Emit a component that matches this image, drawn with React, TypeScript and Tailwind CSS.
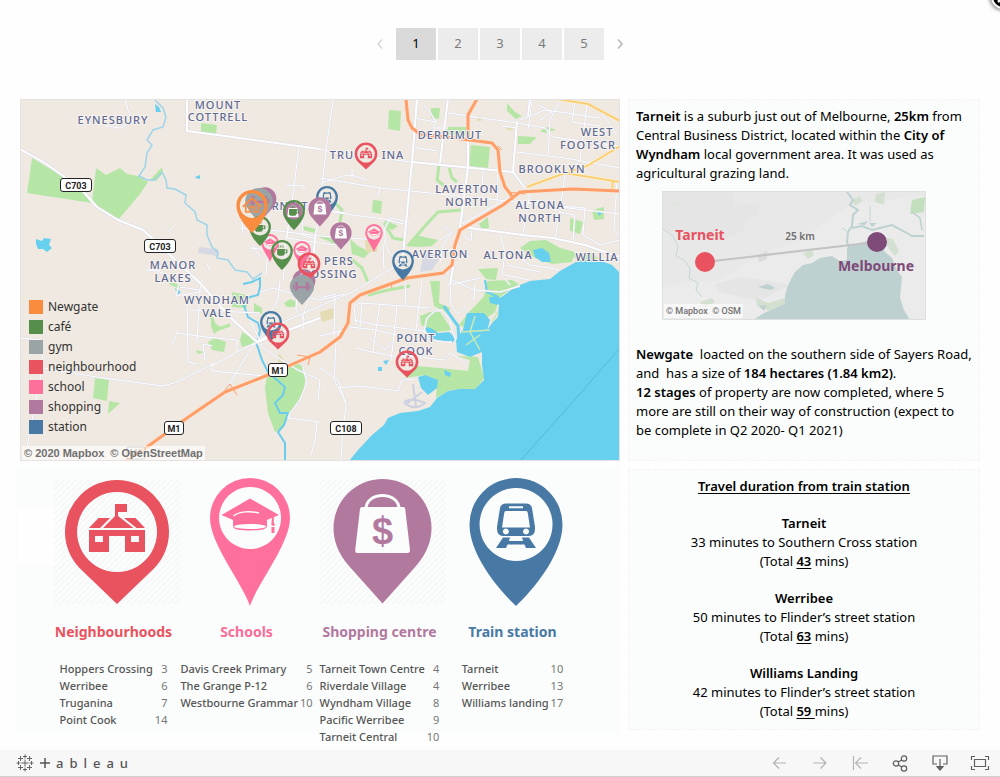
import React from "react";

type Line = string;

const PARKS: Line[] = [
  "32,158 60,175 80,188 92,203 27,193",
  "96,168 106,175 112,172 120,168 127,174 138,176 148,182 140,194 118,220 97,207 92,203",
  "162,167 150,180 156,181 163,173",
  "201,123 217,125 216,134 201,132",
  "95,378 109,380 107,401 93,398",
  "109,401 120,403 108,414",
  "267,377 297,363 303,367 306,375 303,393 290,413 283,428 275,432 268,413 265,387",
  "242,332 258,342 242,347 240,340",
  "232,292 246,295 247,308 232,307",
  "208,342 215,338 226,342 224,352 212,350",
  "254,303 262,308 262,314 254,312",
  "211,318 216,324 222,328 214,334 211,326",
  "196,350 204,352 198,354",
  "389,110 401,111 400,131 388,129",
  "431,108 440,108 439,119 431,118",
  "471,145 490,147 488,168 469,166",
  "446,127 466,127 467,135 448,134",
  "373,200 382,201 381,214 372,212",
  "415,235 438,240 432,246 418,247 406,246",
  "385,220 398,226 392,230 384,226",
  "570,218 583,222 580,234 570,231",
  "592,210 604,207 604,219 594,220",
  "479,224 488,217 489,228 482,229",
  "520,248 530,241 546,240 560,248 575,252 572,262 552,264 535,258",
  "478,269 498,268 496,280 486,279",
  "572,255 590,252 600,260 580,262",
  "518,136 537,137 530,144 518,144",
  "540,131 548,127 556,130 545,133",
  "507,103 515,112 522,116 516,119 507,111",
  "487,281 512,280 519,284 512,288 500,297 495,312 478,324 466,328 459,325 468,313 477,304 484,296",
  "430,281 440,281 439,303 450,308 448,314 434,306",
  "420,316 430,312 440,312 452,330 436,332 421,325",
  "405,378 415,366 440,368 468,371 470,360 456,356 478,357 484,378 476,389 450,390 436,398 437,382 425,375",
  "284,303 290,299 297,302 296,307 287,307",
  "303,226 316,229 314,233 304,230",
  "350,239 358,246 370,252 364,258 352,254",
];

const GREENWAYS: Line[] = [
  "408,246 425,226 438,212 462,210",
  "439,165 437,180 446,187",
  "449,168 452,178 457,182",
  "335,203 342,210 340,222",
  "320,236 330,240 336,244",
  "350,258 362,268 368,282",
  "368,295 388,290 410,286",
  "210,313 216,330 230,325",
  "164,277 172,284 180,287",
  "384,223 393,238 404,240",
];

const WATER: Line[] = [
  "349,461 358,450 372,435 384,425 388,418 400,413 418,411 430,407 437,398 448,391 460,389 475,389 484,380 482,365 482,345 485,333 492,323 498,317 499,305 496,300 503,296 515,287 530,281 550,279 560,271 576,262 596,259 612,265 620,273 620,461",
  "155,104 159,107 161,112 156,112",
  "195,177 200,175 200,179 196,178",
  "36,239 42,241 44,238 51,239 49,245 52,248 47,252 43,249 38,249 36,244",
  "533,250 542,248 549,253 551,262 542,262 535,257",
  "467,313 484,313 490,320 486,335 482,352 470,357 457,352 456,340 463,330",
  "418,377 425,375 438,380 437,388 428,395 421,388",
  "424,327 431,328 438,333 449,332 456,338 452,343 440,340 432,341",
  "378,367 382,367 382,371 378,371",
  "383,361 389,360 386,365",
  "444,370 451,373 450,377 445,375",
  "489,297 499,296 498,305 490,303",
  "597,211 603,212 599,216",
  "175,288 181,292 177,295",
];

const MINOR: Line[] = [
  "105,126 120,128 133,122 128,110 125,99",
  "322,183 342,176 352,175 366,180",
  "352,170 352,178", "286,185 304,186 304,190",
  "333,100 326,150 320,205 312,260", "320,149 335,153 412,162",
  "320,178 380,188 450,195 517,202 620,214",
  "380,187 378,196", "299,147 292,202 287,235 283,280",
  "414,118 436,122 433,128 448,128", "424,105 430,112 436,122", "412,147 437,151",
  "448,113 517,123 545,128 553,137 620,146", "500,130 503,126 517,128",
  "532,100 528,130", "560,100 550,120 548,155", "587,105 580,160 565,175 560,210 555,238",
  "517,152 565,158 620,168", "600,110 617,135", "617,180 614,230 620,236",
  "520,120 545,110 560,112 600,118", "538,105 552,112 540,120", "575,100 572,122 600,126",
  "483,169 482,200", "498,170 497,203", "530,192 523,235", "533,200 560,206 585,208",
  "585,208 583,235 600,245 620,240", "560,212 575,215 573,240",
  "320,210 360,216 384,219 408,225", "410,222 390,218 384,230 386,242",
  "240,228 270,230 320,236 380,240", "242,222 243,234", "270,215 268,245 266,275",
  "303,206 302,235 314,238", "289,218 287,238 320,243 345,246",
  "250,248 270,250 288,252 312,255", "253,245 255,250 262,258",
  "300,206 320,209 345,213", "315,235 314,280 302,320",
  "260,292 274,288 296,295 320,300 345,294", "280,280 278,300 266,320",
  "297,291 296,310 304,318 303,330", "258,340 268,330 288,320 320,306 352,292 406,260",
  "257,343 275,356 298,370 320,380", "250,320 262,345",
  "320,336 345,330 350,325", "320,298 335,294 334,335", "340,328 336,342 334,380 346,402",
  "320,368 338,380 346,405 342,440 341,461", "338,388 360,386 398,391 402,380 415,379",
  "318,400 320,380",
  "177,333 206,337 237,340 237,352", "187,297 188,362 197,364", "190,310 260,313",
  "200,290 197,342", "178,330 172,345", "205,360 203,344 212,346",
  "212,363 212,371 264,376", "212,366 237,352 257,342", "228,387 242,363 255,343",
  "180,287 200,290 202,280", "146,270 158,271 168,277", "168,232 173,227",
  "207,263 210,271", "180,280 176,296 200,292",
  "20,338 42,340 43,363 36,400 27,447",
  "43,368 103,378 163,386 177,382 215,363",
  "303,367 307,383 300,400 290,413 288,418 320,422", "317,422 315,440 311,455",
  "355,305 360,303 390,305 430,308", "354,305 356,325", "362,303 360,327",
  "354,320 378,325 424,331", "350,327 376,330 400,336", "380,303 376,330 373,352",
  "397,305 394,335 391,360", "356,348 372,352 394,356", "370,338 385,350 392,342",
  "394,356 420,357 444,360 450,353", "450,353 463,361 468,365", "405,283 406,306",
  "424,331 427,318 436,310 442,310 450,320 452,331 456,340",
  "424,331 428,338 440,342 452,342", "422,281 416,330", "450,280 451,305 458,314 465,308",
  "452,280 475,290 500,292 520,286", "475,283 474,300",
  "463,235 471,241 472,228", "450,235 443,245 440,262", "383,245 384,270",
  "500,235 505,252 502,275 510,285", "405,262 390,255 384,240",
  "520,258 530,265 550,268 560,270", "507,265 540,272", "505,275 530,280",
  "443,225 452,232 440,240", "460,225 512,196", "448,285 480,278",
];

const MAJOR: Line[] = [
  "187,99 187,131 320,149",
  "20,149 45,163 80,188 97,207 118,220 143,230 170,255 200,283 230,317 257,342 268,336",
  "417,99 412,162 403,255", "448,99 440,163", "468,140 468,167 460,227 450,285",
  "412,162 513,172 525,188", "517,121 513,172", "462,227 523,235 553,238 585,245 620,257",
  "530,99 528,116", "257,342 320,318",
];

const YELLOW: Line[] = [
  "557,99 588,104 620,121",
  "527,187 565,173 587,166 620,146",
  "565,173 620,182", "613,180 612,190",
];

const MOTORWAY: Line[] = [
  "406,99 408,120 412,128 420,134 470,140 492,143 498,150 500,172 505,187 512,196",
  "477,99 468,115 468,140",
  "620,191 573,189 520,192 503,205 460,230 455,245 452,265 443,273 407,278 360,295 350,303 348,323 340,337 320,352 268,375 225,392 187,418 147,447 126,461",
];

const LABELS: [number, number, string][] = [
  [113, 124, "EYNESBURY"], [218, 109, "MOUNT"], [218, 121, "COTTRELL"],
  [450, 139, "DERRIMUT"], [597, 136, "WEST"], [588, 149, "FOOTSCR"],
  [342, 159, "TRU"], [393, 159, "INA"], [552, 173, "BROOKLYN"],
  [467, 193, "LAVERTON"], [467, 206, "NORTH"], [540, 209, "ALTONA"], [540, 222, "NORTH"],
  [290, 210, "RNEIT"], [440, 258, "AVERTON"], [508, 259, "ALTONA"], [597, 261, "WILLIA"],
  [173, 269, "MANOR"], [173, 282, "LAKES"], [339, 265, "PERS"], [334, 278, "OSSING"],
  [217, 304, "WYNDHAM"], [217, 317, "VALE"], [416, 342, "POINT"], [416, 355, "COOK"],
];

const SHIELDS: [number, number, string][] = [
  [76, 185, "C703"], [160, 246, "C703"], [278, 370, "M1"], [174, 428, "M1"], [346, 428, "C108"],
];

type Kind = "neighbourhood" | "school" | "shopping" | "station" | "cafe" | "gym" | "newgate";

const COLORS: Record<Kind, string> = {
  newgate: "#fa8c3f",
  cafe: "#568f4b",
  gym: "#9aa3a6",
  neighbourhood: "#e9525f",
  school: "#ff709d",
  shopping: "#b2799f",
  station: "#4879a5",
};

const DROP =
  "M63 128C46 112 16.5 77 16.5 46.5A46.5 46.5 0 0 1 109.5 46.5C109.5 77 80 112 63 128Z";
const DROP_HOLE = "M63 10a36.5 36.5 0 1 0 .1 0Z";

function PinArt({ kind }: { kind: Kind }) {
  const c = COLORS[kind];
  switch (kind) {
    case "neighbourhood":
      return (
        <g fill={c} fillRule="evenodd">
          <path d="M63 126L25.5 90A52 52 0 1 1 100.5 90ZM63 14a40 40 0 1 0 .1 0Z" />
          <path d="M35 52H91V74H71V58H55V74H35ZM41 58V64H49V58ZM77 58V64H85V58Z" />
          <path d="M49 50L61 38V26H73V34H64V38L79.5 50Z" />
          <path d="M35 50L44.500 40H56L46 50ZM70 40H81.500L91 50H82.500Z" />
        </g>
      );
    case "school":
      return (
        <g fill={c} fillRule="evenodd">
          <path d="M63 128C56 106 23 66 23 40A40 40 0 0 1 103 40C103 66 70 106 63 128ZM63 9a31 31 0 1 0 .1 0Z" />
          <path d="M34.500 37L63 20.500L92 37L80 42V48C80 52 71 52.500 63 52.500S46 52 46 48V42Z" />
          <path d="M85 39h1.800v6l1.500 2-2.200 1-1.800-1z M84.500 49h3v6h-3z" />
          <path d="M46.500 38C52 33 64 33 72 35" fill="none" stroke="#fff" strokeWidth="1.500" />
          <ellipse cx="63" cy="48.500" rx="16" ry="2.600" fill="#fff" />
        </g>
      );
    case "shopping":
      return (
        <g>
          <path
            fill={c}
            d="M62.500 125.500L29 88C18 75 13.500 63 13.500 50A49 49 0 0 1 111.500 50C111.500 63 107 75 96 88Z"
          />
          <path d="M46 31C46 13 79 13 79 31" fill="none" stroke="#fbfdfc" strokeWidth="3" />
          <path d="M42 29H83.500Q85 29 85.200 31L90 72Q90 75 87.500 75H37.500Q35 75 35.200 72L40 31Q40.200 29 42 29Z" fill="#fbfdfc" />
          <text x="62.500" y="65.500" textAnchor="middle" fontSize="38" fontWeight="700" fontFamily="Liberation Sans, sans-serif" fill={c}>
            $
          </text>
        </g>
      );
    case "station":
      return (
        <g fill={c} fillRule="evenodd">
          <path d={DROP + DROP_HOLE} />
          <path d="M53 25.500H73Q78 25.500 79 30L82 49Q82.500 58 76 58H50Q43.500 58 44 49L47 30Q48 25.500 53 25.500ZM56 28.200V30.200H70V28.200ZM53 33Q51.500 33 51.200 35L49 49.500H77L74.800 35Q74.500 33 73 33ZM52.800 50.500a3 3 0 1 0 .1 0ZM73 50.500a3 3 0 1 0 .1 0Z" />
          <path d="M50 59.500H57L56 63H70L69 59.500H76L83 70H73L71.500 66.500H54.500L53 70H43Z" />
        </g>
      );
    case "cafe":
      return (
        <g fill={c} fillRule="evenodd">
          <path d={DROP + DROP_HOLE} />
          <path d="M42 38H75V41H86V56H75Q74 67 65 67H52Q42 67 42 56ZM75 45V52H81V45Z" />
          <path d="M49 24v9M58 22v11M67 24v9" stroke={c} strokeWidth="3.500" />
        </g>
      );
    case "gym":
      return (
        <g>
          <path d="M63 128C43 105 11 76 11 50A52 50 0 0 1 115 50C115 76 83 105 63 128Z" fill={c} />
          <path
            d="M34 30h12v18h34v-18h12v36h-12v-10h-34v10h-12zM25 40h6v20h-6zM95 40h6v20h-6z"
            fill={COLORS.shopping}
          />
        </g>
      );
    case "newgate":
      return (
        <g fill={c} fillRule="evenodd">
          <path d={DROP + DROP_HOLE} />
          <path d="M34 48L63 20L92 48L88 52L84 48V68H67V52H59V68H42V48L38 52ZM47 44V63H54V47H72V63H79V44L63 28Z" />
        </g>
      );
  }
}

const PINS: [Kind, number, number, number][] = [
  ["shopping", 265, 217, 30],
  ["station", 327, 216, 30],
  ["shopping", 320, 227, 30],
  ["gym", 259, 222, 34],
  ["school", 270, 262, 28],
  ["cafe", 260, 246, 30],
  ["shopping", 293, 228, 26],
  ["cafe", 294, 230, 30],
  ["school", 302, 269, 28],
  ["cafe", 282, 270, 30],
  ["shopping", 304, 299, 30],
  ["neighbourhood", 309, 280, 28],
  ["gym", 302, 305, 30],
  ["shopping", 341, 250, 28],
  ["school", 374, 252, 28],
  ["station", 403, 280, 30],
  ["neighbourhood", 366, 170, 28],
  ["station", 271, 341, 30],
  ["neighbourhood", 278, 350, 28],
  ["neighbourhood", 407, 378, 28],
  ["newgate", 252, 233, 43],
];

function Roads({ lines, color, width }: { lines: Line[]; color: string; width: number }) {
  return (
    <g fill="none" stroke={color} strokeWidth={width} strokeLinejoin="round">
      {lines.map((p) => (
        <polyline key={p} points={p} />
      ))}
    </g>
  );
}

function SuburbMap() {
  return (
    <svg viewBox="20 99 600 362" className="block w-full" role="img" aria-label="Map of Tarneit and surrounding suburbs">
      <rect x="20" y="99" width="600" height="362" fill="#f0e9e1" />
      <g fill="#b5e6a5">
        {PARKS.map((p) => (
          <polygon key={p} points={p} />
        ))}
      </g>
      <Roads lines={GREENWAYS} color="#b5e6a5" width={3} />
      <g fill="#d6d9e3">
        <polygon points="199,247 218,249 217,256 198,253" />
        <polygon points="424,251 437,249 440,258 432,270 420,272" />
      </g>
      <g fill="#e4dcb4">
        <polygon points="477,116 481,116 481,121 477,121" />
        <polygon points="365,240 378,241 377,252 366,252" />
        <polygon points="279,353 284,360 282,366 278,362" />
        <polygon points="320,312 333,308 335,318 322,322" />
        <polygon points="505,127 513,126 513,130 507,130" />
      </g>
      <g fill="#67d0ee">
        {WATER.map((p) => (
          <polygon key={p} points={p} />
        ))}
      </g>
      <polyline points="620,348 570,405 520,461" fill="none" stroke="#55b8d8" strokeWidth="1" />
      <polyline
        points="155,100 163,108 166,117 163,127 153,130 147,140 152,145 147,153 145,167 139,176 147,180 155,180 162,172 166,180 167,188 175,189 186,195 185,203 195,212 197,220 207,225 207,235 212,247 218,252 217,258 228,260 235,270 247,272 253,279 262,273"
        fill="none"
        stroke="#9fd4ea"
        strokeWidth="1.500"
      />
      <polyline
        points="243,284 252,282 260,278 260,287 258,295 250,297 243,303 248,317 258,323 260,330 257,345 262,360 268,372 285,387 283,395 275,403 280,413 288,413 284,425 278,432 285,443 285,461"
        fill="none"
        stroke="#6accec"
        strokeWidth="2"
      />
      <polyline points="444,306 452,318 458,326 459,340" fill="none" stroke="#67d0ee" strokeWidth="3" />
      <polyline points="485,280 487,292 498,297" fill="none" stroke="#67d0ee" strokeWidth="2" />
      <path d="M475 316L470 332L480 350M462 332L490 330M466 345L480 335M498 312L492 322" fill="none" stroke="#cbe9b4" strokeWidth="1.500" />
      <path d="M413 384L416 407M405 405L422 392M404 402Q414 412 425 403Q412 397 404 402" fill="none" stroke="#cdd0e0" strokeWidth="2" />
      <Roads lines={MINOR} color="#dedfea" width={2} />
      <Roads lines={MINOR} color="#ffffff" width={1} />
      <Roads lines={MAJOR} color="#d9dae8" width={3} />
      <Roads lines={MAJOR} color="#ffffff" width={2} />
      <Roads lines={YELLOW} color="#fff3d0" width={3} />
      <Roads lines={YELLOW} color="#f9cf76" width={2} />
      <Roads lines={MOTORWAY} color="#fbe3d2" width={4} />
      <Roads lines={MOTORWAY} color="#ff9e68" width={3} />
      <g fill="none" stroke="#ff9e68" strokeWidth="1">
        <path d="M225 390L230 384L237 395M297 355L310 357L308 365M505 187L513 200M508 192L525 194M498 146L502 150M390 283L392 288" />
      </g>

      <g
        fontFamily="Noto Sans, Open Sans, sans-serif"
        fontSize="11"
        fontWeight="500"
        textAnchor="middle"
        letterSpacing="1"
        fill="#5e6a92"
        stroke="#f7f3ef"
        strokeWidth="2"
        paintOrder="stroke"
      >
        {LABELS.map(([x, y, t]) => (
          <text key={`${t}${x}${y}`} x={x} y={y}>
            {t}
          </text>
        ))}
      </g>

      <g fontFamily="Roboto, sans-serif" fontSize="9" fontWeight="700" textAnchor="middle">
        <g opacity="0.4">
          <rect x="127" y="447" width="18" height="12" rx="2" fill="#fff" stroke="#222" />
          <text x="136" y="456">M1</text>
        </g>
        {SHIELDS.map(([x, y, t]) => {
          const w = t.length > 2 ? 31 : 19;
          return (
            <g key={`${t}${x}`}>
              <rect x={x - w / 2} y={y - 6.5} width={w} height="13" rx="2.500" fill="#fff" stroke="#222" strokeWidth="1" />
              <text x={x} y={y + 3.5} fill="#222">
                {t}
              </text>
            </g>
          );
        })}
      </g>

      {PINS.map(([kind, x, tip, h]) => (
        <svg key={`${kind}${x}${tip}`} x={x - h / 2} y={tip - h} width={h} height={h} viewBox="0 0 126 128">
          <PinArt kind={kind} />
        </svg>
      ))}
      <rect x="20.500" y="99.500" width="599" height="361" fill="none" stroke="#e3e3e3" />
    </svg>
  );
}

const LEGEND: [string, string][] = [
  ["Newgate", "bg-[#fa8c3f]"],
  ["café", "bg-[#568f4b]"],
  ["gym", "bg-[#9aa3a6]"],
  ["neighbourhood", "bg-[#e9525f]"],
  ["school", "bg-[#ff709d]"],
  ["shopping", "bg-[#b2799f]"],
  ["station", "bg-[#4879a5]"],
];

function DistanceMap() {
  return (
    <svg viewBox="662 191 264 129" className="block w-full" role="img" aria-label="Distance from Tarneit to Melbourne">
      <rect x="662" y="191" width="264" height="129" fill="#e8e8e8" />
      <polygon points="662,191 732,191 735,205 760,203 758,215 745,222 742,232 720,240 690,236 662,230" fill="#e5e5e5" />
      <polygon points="760,255 800,240 850,205 926,195 926,320 662,320 662,285 720,280" fill="#ebebeb" />
      <polygon points="715,284 742,277 790,285 760,301 720,292" fill="#e5e5e5" />
      <g fill="#d3dfcf">
        <polygon points="756,298 768,303 785,298 787,305 770,311 757,306" />
        <polygon points="852,200 860,196 862,201 855,206" />
        <polygon points="876,194 885,192 884,205 875,202" />
        <polygon points="912,200 925,197 924,212 910,214" fill="#c2dfbe" />
        <polygon points="887,238 893,239 899,251 895,256 887,246" />
        <polygon points="803,253 812,250 814,255 808,259" />
        <polygon points="700,302 712,298 715,302 705,308" />
        <polygon points="672,203 679,203 679,207 672,207" fill="#e0e6dd" />
      </g>
      <path d="M753 320L764 313L785 304L785 296L787 288L791 279L795 272L803 265L812 263L820 258L832 256L840 261L847 260L847 248L851 245L868 241L882 245L885 252L892 258L897 270L902 277L900 298L904 310L910 320Z" fill="#bed1d1" />
      <path d="M758 287L768 284L775 288L770 290ZM759 306L766 305L764 311ZM857 224L868 221L865 225ZM869 223L877 223L872 227Z" fill="#bed1d1" />
      <g fill="none" stroke="#bed1d1">
        <path d="M847 192L853 200L850 205L858 210L853 215L852 226L848 232L847 242L850 250" strokeWidth="2" />
        <path d="M852 228L862 226L872 230L892 225L905 232L912 236L924 236" strokeWidth="2" />
        <path d="M912 212L920 218L922 230" strokeWidth="1.500" />
        <path d="M870 206V222M842 228L848 232" strokeWidth="0.800" />
        <path d="M663 229L673 236L678 246L676 256L684 260L690 268L689 278L698 283L696 290L702 297" strokeWidth="0.800" />
      </g>
      <polygon points="757,255 767,251 767,259 759,262" fill="#dcdcdc" />
      <line x1="705" y1="262" x2="877" y2="242" stroke="#c3c3c3" strokeWidth="2" />
      <circle cx="705" cy="262" r="10" fill="#e9525f" />
      <circle cx="877" cy="242" r="10" fill="#7e4a78" />
      <g fontFamily="Noto Sans, Open Sans, sans-serif" textAnchor="middle">
        <text x="700" y="240" fontSize="14" fontWeight="700" fill="#e9525f">Tarneit</text>
        <text x="876" y="271" fontSize="14" fontWeight="700" fill="#7e4a78">Melbourne</text>
        <text x="800" y="240" fontSize="10" fontWeight="600" fill="#6f6f6f">25 km</text>
      </g>
      <rect x="662.500" y="191.500" width="263" height="128" fill="none" stroke="#dfdfdf" />
    </svg>
  );
}

interface Category {
  kind: Kind;
  title: string;
  color: string;
  hatched: boolean;
  rows: [string, number][];
}

const CATEGORIES: Category[] = [
  {
    kind: "neighbourhood", title: "Neighbourhoods", color: "text-[#e9525f]", hatched: true,
    rows: [["Hoppers Crossing", 3], ["Werribee", 6], ["Truganina", 7], ["Point Cook", 14]],
  },
  {
    kind: "school", title: "Schools", color: "text-[#fa6d99]", hatched: false,
    rows: [["Davis Creek Primary", 5], ["The Grange P-12", 6], ["Westbourne Grammar", 10]],
  },
  {
    kind: "shopping", title: "Shopping centre", color: "text-[#b2799f]", hatched: true,
    rows: [["Tarneit Town Centre", 4], ["Riverdale Village", 4], ["Wyndham Village", 8], ["Pacific Werribee", 9], ["Tarneit Central", 10]],
  },
  {
    kind: "station", title: "Train station", color: "text-[#4879a5]", hatched: false,
    rows: [["Tarneit", 10], ["Werribee", 13], ["Williams landing", 17]],
  },
];

function CategoryCard({ item }: { item: Category }) {
  return (
    <section className="flex flex-col items-center">
      <svg viewBox="0 0 126 128" className="h-32 w-[126px]" aria-hidden="true">
        {item.hatched && (
          <>
            <defs>
              <pattern id={`hatch-${item.kind}`} width="6" height="6" patternUnits="userSpaceOnUse">
                <path d="M-1 7L7 -1M-1 1L1 -1M5 7L7 5" stroke="#f5f6f6" strokeWidth="1.500" />
              </pattern>
            </defs>
            <rect y="2" width="126" height="124" fill={`url(#hatch-${item.kind})`} />
          </>
        )}
        <PinArt kind={item.kind} />
      </svg>
      <h2 className={`mt-4 pr-1.5 text-[14px] leading-5 font-bold whitespace-nowrap ${item.color}`}>{item.title}</h2>
      <table className="mt-[18px] mr-1.5 text-[11px] leading-[17px] whitespace-nowrap text-[#555]">
        <tbody>
          {item.rows.map(([name, minutes]) => (
            <tr key={name}>
              <th scope="row" className="p-0 text-left font-medium">{name}</th>
              <td className="p-0 pl-0.5 text-right text-[#777]">{minutes}</td>
            </tr>
          ))}
        </tbody>
      </table>
    </section>
  );
}

const TRIPS: [string, string, string][] = [
  ["Tarneit", "33 minutes to Southern Cross station", "43"],
  ["Werribee", "50 minutes to Flinder’s street station", "63"],
  ["Williams Landing", "42 minutes to Flinder’s street station", "59 "],
];

function TableauMark() {
  const crosses: [number, number, number][] = [
    [9, 9, 3.5], [9, 2.5, 2], [9, 15.5, 2], [2.5, 9, 2], [15.5, 9, 2],
    [4.5, 4.5, 2.5], [13.5, 4.5, 2.5], [4.5, 13.5, 2.5], [13.5, 13.5, 2.5],
  ];
  return (
    <svg viewBox="0 0 18 18" className="size-[18px]" aria-hidden="true">
      {crosses.map(([x, y, r]) => (
        <path key={`${x}-${y}`} d={`M${x - r} ${y}H${x + r}M${x} ${y - r}V${y + r}`} stroke="#666" strokeWidth="1" />
      ))}
    </svg>
  );
}

function ToolButton({ label, muted, children }: { label: string; muted?: boolean; children: React.ReactNode }) {
  return (
    <button type="button" aria-label={label} disabled={muted} className="flex size-5 items-center justify-center">
      <svg viewBox="0 0 20 20" className="size-5" fill="none" stroke={muted ? "#b4b4b4" : "#5f5f5f"} strokeWidth="1.200">
        {children}
      </svg>
    </button>
  );
}

export default function App() {
  return (
    <div className="relative overflow-hidden bg-[#fefefe] font-['Noto_Sans','Open_Sans',sans-serif] text-black">
      <button type="button" aria-label="Close" className="absolute -top-[15px] -right-[15px] flex size-6 items-center justify-center rounded-full border-2 border-white bg-black shadow-[0_0_4px_1px_rgba(0,0,0,0.6)]">
        <svg viewBox="0 0 12 12" className="size-3" stroke="#fff" strokeWidth="2.500" aria-hidden="true">
          <path d="M1 1L11 11M11 1L1 11" />
        </svg>
      </button>

      <nav aria-label="Story points" className="flex items-center justify-center pt-7 text-[13px]">
        <button type="button" aria-label="Previous" disabled className="mr-2 flex h-8 w-4 items-center justify-center">
          <svg viewBox="0 0 6 10" className="h-2.5 w-1.5" fill="none" stroke="#d9d9d9" strokeWidth="1.500"><path d="M5 .5L1 5L5 9.500" /></svg>
        </button>
        <div className="flex gap-0.5">
          {[1, 2, 3, 4, 5].map((n) => (
            <button
              type="button"
              key={n}
              className={n === 1 ? "h-8 w-10 bg-[#dadada] text-black" : "h-8 w-10 bg-[#ececec] text-[#7b7b7b]"}
            >
              {n}
            </button>
          ))}
        </div>
        <button type="button" aria-label="Next" className="ml-2 flex h-8 w-4 items-center justify-center">
          <svg viewBox="0 0 6 10" className="h-2.5 w-1.5" fill="none" stroke="#bdbdbd" strokeWidth="1.800"><path d="M1 .5L5 5L1 9.500" /></svg>
        </button>
      </nav>

      <main className="mt-[39px] grid grid-cols-[minmax(0,600fr)_minmax(0,352fr)] items-start gap-x-2 px-5">
        <div>
          <div className="relative">
            <SuburbMap />
            <ul className="absolute bottom-6 left-[9px] text-[12px] leading-5 text-[#333]">
              {LEGEND.map(([label, swatch]) => (
                <li key={label} className="flex items-center gap-[5px]">
                  <span className={`size-3.5 ${swatch}`} />
                  {label}
                </li>
              ))}
            </ul>
            <p className="absolute bottom-px left-0.5 bg-white/60 px-0.5 font-['Liberation_Sans',sans-serif] text-[11px] leading-[14px] font-bold text-[#707070]">
              © 2020 Mapbox&nbsp; © OpenStreetMap
            </p>
          </div>

          <div className="relative mt-[5px] -ml-1 flow-root bg-[#fbfdfc] pt-3 pr-[38px] pl-[34px]">
            <div className="absolute top-10 left-0.5 h-[59px] w-[42px] bg-[#fefefe]" />
            <div className="relative -mb-[11px] grid grid-cols-4 items-start">
              {CATEGORIES.map((item) => (
                <CategoryCard key={item.kind} item={item} />
              ))}
            </div>
          </div>
        </div>

        <div className="flex flex-col gap-2 text-[13px] leading-[19px]">
          <section className="border border-dashed border-[#f3f4f4] bg-[#fbfdfc] px-[7px] pt-[7px] pb-5">
            <p>
              <b className="font-semibold">Tarneit</b> is a suburb just out of Melbourne, <b className="font-semibold">25km</b> from
              Central Business District, located within the <b className="font-semibold">City of Wyndham</b> local
              government area. It was used as agricultural grazing land.
            </p>
            <div className="relative mt-2 mr-[46px] ml-[26px]">
              <DistanceMap />
              <p className="absolute bottom-0.5 left-0.5 bg-white/60 px-0.5 font-['Roboto',sans-serif] text-[9px] leading-[14px] font-medium text-[#707070]">
                © Mapbox&nbsp; © OSM
              </p>
            </div>
            <p className="mt-[25px]">
              <b className="font-semibold">Newgate</b>&nbsp; loacted on the southern side of Sayers Road, and&nbsp; has a
              size of <b className="font-semibold">184 hectares (1.84 km2)</b>.
              <br />
              <b className="font-semibold">12 stages</b> of property are now completed, where 5 more are still on their
              way of construction (expect to be complete in Q2 2020- Q1 2021)
            </p>
          </section>

          <section className="flex flex-col gap-[18px] border border-dashed border-[#f3f4f4] bg-[#fbfdfc] pt-[7px] pb-2 text-center">
            <h2 className="font-semibold underline underline-offset-2">Travel duration from train station</h2>
            {TRIPS.map(([name, text, total]) => (
              <div key={name}>
                <h3 className="font-semibold">{name}</h3>
                <p>{text}</p>
                <p>
                  (Total <b className="font-semibold underline underline-offset-2">{total}</b>
                  {total.endsWith(" ") ? "" : " "}mins)
                </p>
              </div>
            ))}
          </section>
        </div>
      </main>

      <footer className="mt-4 flex h-[27px] items-center justify-between border-b border-[#cfcfcf] bg-[#f7f7f7] pr-2.5 pl-4">
        <a href="#tableau" aria-label="tableau" className="flex items-center gap-1.5 text-[#555]">
          <TableauMark />
          <span className="flex w-[88px] items-center justify-between text-[13px] leading-5 font-medium">
            <svg viewBox="0 0 10 10" className="size-2.5" stroke="#555" strokeWidth="1.500" aria-hidden="true">
              <path d="M5 0V10M0 5H10" />
            </svg>
            <span>a</span><span>b</span><span>l</span><span>e</span><span>a</span><span>u</span>
          </span>
        </a>
        <div className="flex items-center gap-5">
          <ToolButton label="Undo" muted><path d="M16 10H3.500M9 4.500L3.500 10L9 15.500" /></ToolButton>
          <ToolButton label="Redo" muted><path d="M3.500 10H16M10.500 4.500L16 10L10.500 15.500" /></ToolButton>
          <ToolButton label="Reset" muted><path d="M3.500 3V17M18 10H5.500M11 4.500L5.500 10L11 15.500" /></ToolButton>
          <ToolButton label="Share">
            <circle cx="6" cy="10.500" r="2.700" /><circle cx="14" cy="5.500" r="2.700" /><circle cx="14" cy="15.500" r="2.700" />
            <path d="M8.300 9L11.700 7M8.300 12L11.700 14" />
          </ToolButton>
          <ToolButton label="Download">
            <path d="M7 11H3V3H17V11H13M10 6V14" /><path d="M7 13.500H13L10 17Z" fill="#5f5f5f" />
          </ToolButton>
          <ToolButton label="Full screen">
            <path d="M1.500 7V3.500H5M15 3.500H18.500V7M18.500 13V16.500H15M5 16.500H1.500V13M4.500 6.500H15.500V13.500H4.500Z" />
          </ToolButton>
        </div>
      </footer>
    </div>
  );
}
